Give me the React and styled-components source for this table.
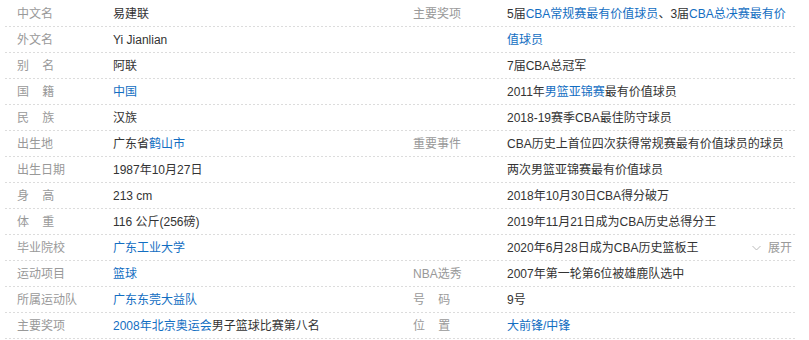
import React from "react";
import styled, { createGlobalStyle } from "styled-components";

const GlobalStyle = createGlobalStyle`
  html, body {
    margin: 0;
    padding: 0;
    background: #fff;
  }
  body {
    font-family: "Liberation Sans", Arial, "Noto Sans CJK SC", sans-serif;
    font-size: 12px;
    color: #333;
  }
`;

const Wrapper = styled.div`
  display: flex;
  gap: 1px;
  padding: 1px 0 0 5px;
  width: 791px;
`;

const Column = styled.dl`
  margin: 0;
  width: 395px;
  display: flex;
  flex-direction: column;
`;

const Row = styled.div`
  display: flex;
  line-height: 26px;
  background-image: repeating-linear-gradient(to right, transparent 0 2px, #fff 2px 4px),
    linear-gradient(to bottom, transparent 25px, #dcdcdc 25px);
  background-size: auto, 100% 26px;
`;

const Label = styled.dt`
  flex: 0 0 ${({ $right }) => ($right ? "94px" : "96px")};
  padding-left: 12px;
  color: #999;
  white-space: pre;
`;

const Value = styled.dd`
  margin: 0;
  flex: 1;
  display: ${({ $toggle }) => ($toggle ? "flex" : "block")};
  padding-right: ${({ $wrap }) => ($wrap ? "6px" : "0")};
`;

const Link = styled.a`
  color: #136ec2;
  text-decoration: none;
`;

const Toggle = styled.span`
  margin-left: auto;
  margin-right: 4px;
  display: flex;
  align-items: center;
  gap: 7px;
  color: #999;
  svg {
    width: 9px;
    height: 6px;
  }
`;

const Chevron = () => (
  <svg viewBox="0 0 9 6" fill="none" stroke="#bbb" strokeWidth="1">
    <path d="M0.5 1 L4.5 5 L8.5 1" />
  </svg>
);

const left = [
  { label: "中文名", value: [["易建联"]] },
  { label: "外文名", value: [["Yi Jianlian"]] },
  { label: "别\u00a0\u00a0\u00a0\u00a0名", value: [["阿联"]] },
  { label: "国\u00a0\u00a0\u00a0\u00a0籍", value: [["中国", true]] },
  { label: "民\u00a0\u00a0\u00a0\u00a0族", value: [["汉族"]] },
  { label: "出生地", value: [["广东省"], ["鹤山市", true]] },
  { label: "出生日期", value: [["1987年10月27日"]] },
  { label: "身\u00a0\u00a0\u00a0\u00a0高", value: [["213 cm"]] },
  { label: "体\u00a0\u00a0\u00a0\u00a0重", value: [["116 公斤(256磅)"]] },
  { label: "毕业院校", value: [["广东工业大学", true]] },
  { label: "运动项目", value: [["篮球", true]] },
  { label: "所属运动队", value: [["广东东莞大益队", true]] },
  { label: "主要奖项", value: [["2008年北京奥运会", true], ["男子篮球比赛第八名"]] },
];

const right = [
  {
    label: "主要奖项",
    value: [["5届"], ["CBA常规赛最有价值球员", true], ["、3届"], ["CBA总决赛最有价值球员", true]],
  },
  { label: "", value: [["7届CBA总冠军"]] },
  { label: "", value: [["2011年"], ["男篮亚锦赛", true], ["最有价值球员"]] },
  { label: "", value: [["2018-19赛季CBA最佳防守球员"]] },
  { label: "重要事件", value: [["CBA历史上首位四次获得常规赛最有价值球员的球员"]] },
  { label: "", value: [["两次男篮亚锦赛最有价值球员"]] },
  { label: "", value: [["2018年10月30日CBA得分破万"]] },
  { label: "", value: [["2019年11月21日成为CBA历史总得分王"]] },
  { label: "", value: [["2020年6月28日成为CBA历史篮板王"]], toggle: true },
  { label: "NBA选秀", value: [["2007年第一轮第6位被雄鹿队选中"]] },
  { label: "号\u00a0\u00a0\u00a0\u00a0码", value: [["9号"]] },
  { label: "位\u00a0\u00a0\u00a0\u00a0置", value: [["大前锋/中锋", true]] },
];

const renderValue = (parts) =>
  parts.map(([text, link], i) =>
    link ? (
      <Link key={i} href="#">
        {text}
      </Link>
    ) : (
      <React.Fragment key={i}>{text}</React.Fragment>
    )
  );

export default function App() {
  return (
    <>
      <GlobalStyle />
      <Wrapper>
        <Column>
          {left.map((item, i) => (
            <Row key={i}>
              <Label>{item.label}</Label>
              <Value>{renderValue(item.value)}</Value>
            </Row>
          ))}
        </Column>
        <Column>
          {right.map((item, i) => (
            <Row key={i}>
              <Label $right>{item.label}</Label>
              <Value $wrap={i === 0} $toggle={item.toggle}>
                {item.toggle ? <span>{renderValue(item.value)}</span> : renderValue(item.value)}
                {item.toggle && (
                  <Toggle>
                    <Chevron />
                    展开
                  </Toggle>
                )}
              </Value>
            </Row>
          ))}
        </Column>
      </Wrapper>
    </>
  );
}
